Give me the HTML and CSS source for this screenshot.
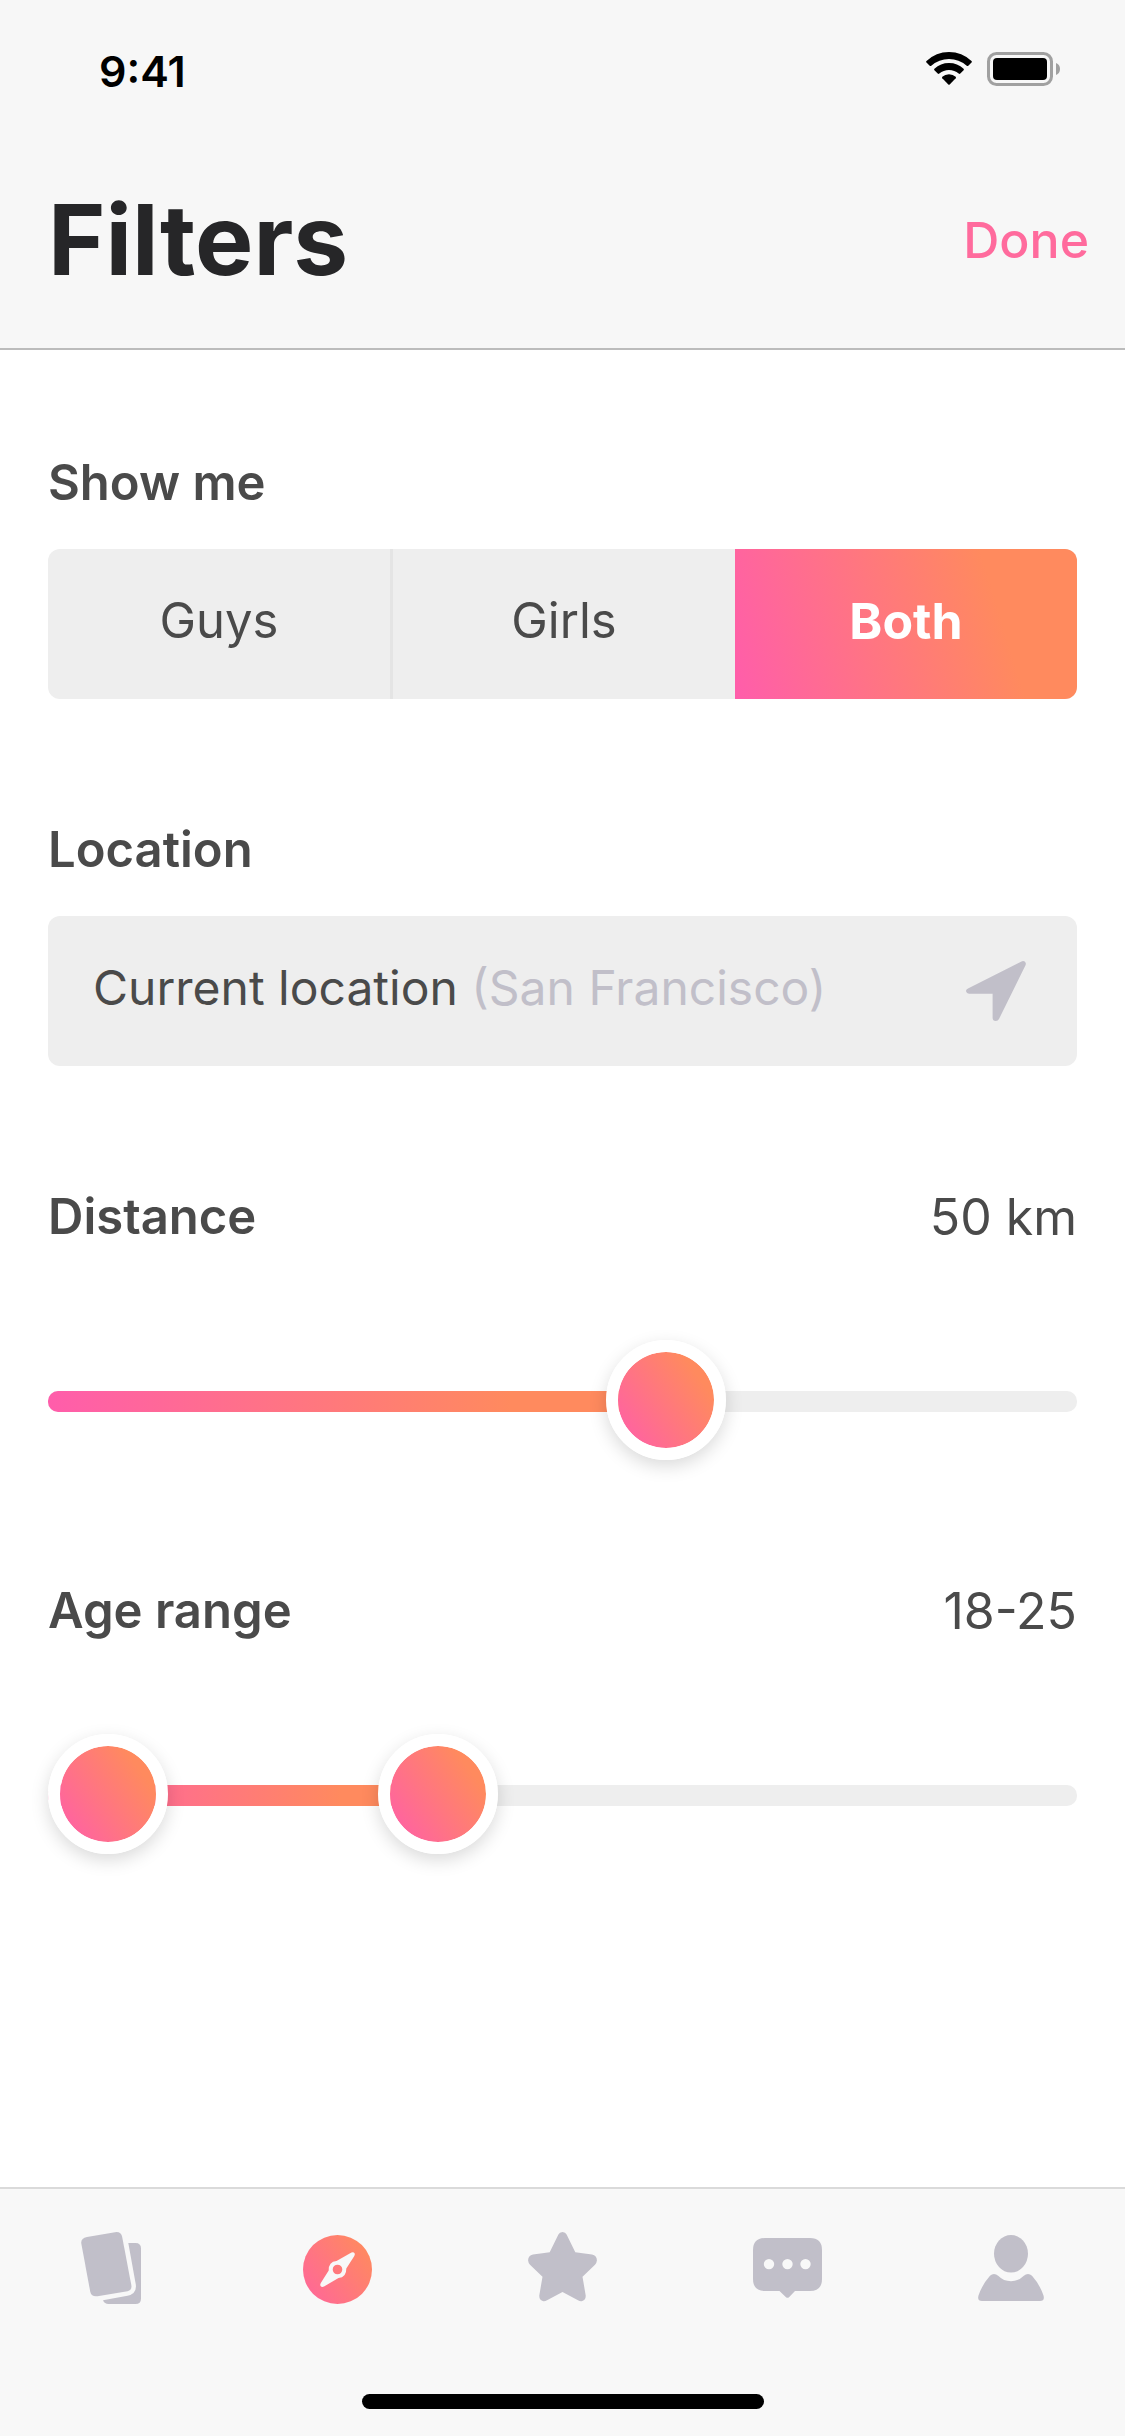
FILE: index.html
```html
<!DOCTYPE html>
<html lang="en">
<head>
    <meta charset="UTF-8">
    <meta name="viewport" content="width=device-width, initial-scale=1.0">
    <title>Filters</title>
    <link rel="stylesheet" href="styles.css">
</head>
<body>
    <header class="header">
        <div class="status-bar">
            <span class="time">9:41</span>
            <div class="status-icons">
                <svg width="46" height="34" viewBox="0 0 46 34">
                    <path d="M0.5 9 Q10 0 23 0 Q36 0 45.5 9 Q46.3 9.800 45.500 10.600 L42.300 13.800 Q41.500 14.400 40.700 13.700 Q33 7 23 7 Q13 7 5.300 13.700 Q4.500 14.400 3.700 13.800 L0.500 10.600 Q-0.300 9.800 0.500 9 Z" />
                    <path d="M8.400 16.800 Q14.500 11 23 11 Q31.500 11 37.600 16.800 Q38.300 17.500 37.600 18.300 L34.300 21.600 Q33.500 22.200 32.700 21.600 Q28.500 18 23 18 Q17.500 18 13.300 21.600 Q12.500 22.200 11.700 21.600 L8.400 18.300 Q7.700 17.500 8.400 16.800 Z" />
                    <path d="M16.300 24.800 Q19 22.300 23 22.300 Q27 22.300 29.700 24.800 Q30.300 25.500 29.700 26.200 L23.700 32.500 Q23 33.200 22.300 32.500 L16.300 26.200 Q15.700 25.500 16.300 24.800 Z" />
                </svg>
                <svg width="73" height="34" viewBox="0 0 73 34">
                    <rect class="battery-case" x="1.5" y="1.5" width="63" height="31" rx="8" />
                    <rect x="6" y="6" width="54" height="22" rx="4" />
                    <path class="battery-cap" d="M69 11 Q73 12.500 73 17 Q73 21.500 69 23 Z" />
                </svg>
            </div>
        </div>
        <div class="title-bar">
            <h1>Filters</h1>
            <button type="button" class="done">Done</button>
        </div>
    </header>

    <main>
        <fieldset class="group">
            <legend class="label">Show me</legend>
            <div class="segments">
                <label class="segment"><input type="radio" name="show" value="guys"><span>Guys</span></label>
                <label class="segment"><input type="radio" name="show" value="girls"><span>Girls</span></label>
                <label class="segment"><input type="radio" name="show" value="both" checked><span>Both</span></label>
            </div>
        </fieldset>

        <section class="group">
            <label class="label" for="location">Location</label>
            <button type="button" class="location" id="location">
                <span>Current location <span class="city">(San Francisco)</span></span>
                <svg width="60" height="60" viewBox="0 0 60 60">
                    <path d="M55.500 0.400 Q58 -0.500 59.500 1.500 Q60.200 2.800 59.500 4.300 L33 58 Q32 60 29.800 60 Q26.600 60 26.600 56.500 V32.700 H3 Q0.500 32.700 0 30.300 Q-0.200 28.500 2 27.600 Z" />
                </svg>
            </button>
        </section>

        <section class="group">
            <div class="row">
                <label class="label" for="distance">Distance</label>
                <output class="value" for="distance">50 km</output>
            </div>
            <div class="slider">
                <div class="track"><div class="fill" style="width: 60%"></div></div>
                <input type="range" id="distance" min="0" max="100" step="0.1" value="61.4" aria-valuetext="50 km">
            </div>
        </section>

        <section class="group">
            <div class="row">
                <label class="label" for="age-min">Age range</label>
                <output class="value" for="age-min age-max">18-25</output>
            </div>
            <div class="slider">
                <div class="track"><div class="fill" style="width: 38%"></div></div>
                <input type="range" id="age-min" min="0" max="100" step="0.1" value="0" aria-valuetext="18">
                <input type="range" id="age-max" min="0" max="100" step="0.1" value="36.3" aria-label="Maximum age" aria-valuetext="25">
            </div>
        </section>
    </main>

    <footer class="footer">
        <nav class="tabs">
            <a href="#cards" class="tab" aria-label="Cards">
                <svg width="69" height="75" viewBox="-3 0 69 75">
                    <path d="M6 6 L34 1.200 Q40 0.300 41.200 6 L50.400 54.500 Q51 59.300 46.500 60.200 L16.500 65.200 Q10.500 66 9.300 61 L0.300 12.500 Q-0.500 7.300 6 6 Z" />
                    <path d="M47.300 12 H54.500 Q60 12 60 17.500 V67.500 Q60 73 54.500 73 H27.500 Q23.500 73 22 69.200 L46.500 64.800 Q56 62.500 54.800 53.500 Z" />
                </svg>
            </a>
            <a href="#explore" class="tab" aria-label="Explore" aria-current="page">
                <svg width="69" height="75" viewBox="0 -4 69 75">
                    <defs>
                        <linearGradient id="warm" x1="0" y1="0.850" x2="0.950" y2="0.150">
                            <stop offset="0" stop-color="#ff6799" />
                            <stop offset="1" stop-color="#ff8a5e" />
                        </linearGradient>
                    </defs>
                    <circle cx="34.500" cy="34.500" r="34.500" fill="url(#warm)" />
                    <path class="needle" fill-rule="evenodd" d="M48.500 17.500 Q50.500 16.500 51.600 18.200 Q52.200 19.500 51.300 21 L43.300 33.500 Q43.500 42.500 35.500 43 L21 51.600 Q18.800 52.600 17.500 50.900 Q16.800 49.500 17.800 47.900 L25.700 35.500 Q25.500 26.500 33.500 26 Z M34.500 29.700 A4.800 4.800 0 1 0 34.500 39.300 A4.800 4.800 0 1 0 34.500 29.700 Z" />
                </svg>
            </a>
            <a href="#favourites" class="tab" aria-label="Favourites">
                <svg width="69" height="75" viewBox="0 -1 69 75">
                    <path d="M30.400 2.500 Q31.500 0 34.500 0 Q37.500 0 38.600 2.500 L47.300 20.300 L64 22.500 Q69 23.500 68.900 28.500 Q68.800 30.500 67 32.700 L54.500 44.700 L57.700 63.500 Q58 68.500 53.500 69.200 Q52 69.400 49.500 68 L34.500 60 L19.500 68 Q17 69.400 15.500 69.200 Q11 68.500 11.300 63.500 L14.500 44.700 L2 32.700 Q0.200 30.500 0.100 28.500 Q0 23.500 5 22.500 L21.700 20.300 Z" />
                </svg>
            </a>
            <a href="#messages" class="tab" aria-label="Messages">
                <svg width="69" height="75" viewBox="0 -7 69 75">
                    <path fill-rule="evenodd" d="M12 0 H57 Q69 0 69 12 V41 Q69 53 57 53 H42 L36 59.200 Q34.500 60.500 33 59.200 L26.500 53 H12 Q0 53 0 41 V12 Q0 0 12 0 Z M16 20.900 a5.200 5.200 0 1 0 0 10.400 a5.200 5.200 0 1 0 0 -10.400 Z M34.500 20.900 a5.200 5.200 0 1 0 0 10.400 a5.200 5.200 0 1 0 0 -10.400 Z M52.500 20.900 a5.200 5.200 0 1 0 0 10.400 a5.200 5.200 0 1 0 0 -10.400 Z" />
                </svg>
            </a>
            <a href="#profile" class="tab" aria-label="Profile">
                <svg width="69" height="75" viewBox="0 -4 69 75">
                    <ellipse cx="33" cy="18.800" rx="17" ry="18.800" />
                    <path d="M12 40.700 Q16 37 20.500 41 Q25.500 46.200 33 46.200 Q40.500 46.200 45.500 41 Q50 37 54 40.700 Q61.500 49 65.500 60.500 Q67 66 62 66 H4 Q-1 66 0.500 60.500 Q4.500 49 12 40.700 Z" />
                </svg>
            </a>
        </nav>
        <div class="home-indicator"></div>
    </footer>
</body>
</html>
```
FILE: styles.css
```css
* {
    box-sizing: border-box;
}

body {
    margin: 0;
    display: flex;
    flex-direction: column;
    min-height: 100vh;
    background: #fff;
    color: #4a4a4a;
    font-family: Inter, "Liberation Sans", sans-serif;
    font-size: 50px;
    line-height: 60px;
}

button {
    border: none;
    padding: 0;
    background: none;
    color: inherit;
    font: inherit;
    cursor: pointer;
}

/* header */

.header {
    background: #f7f7f7;
    border-bottom: 2px solid #bcbcbc;
}

.status-bar {
    display: flex;
    justify-content: space-between;
    align-items: center;
    height: 132px;
    padding: 10px 65px 0 99px;
    color: #000;
}

.time {
    font-size: 43px;
    font-weight: 600;
}

.status-icons {
    display: flex;
    gap: 15px;
    padding-bottom: 4px;
}

.battery-case {
    fill: none;
    stroke: #a0a0a0;
    stroke-width: 3px;
}

.battery-cap {
    fill: #a0a0a0;
}

.title-bar {
    display: flex;
    justify-content: space-between;
    align-items: center;
    height: 216px;
    padding: 0 36px 0 48px;
}

h1 {
    margin: 0;
    color: #262628;
    font-size: 98px;
    font-weight: 700;
    line-height: 120px;
}

.done {
    color: #ff6b9d;
    font-weight: 500;
}

/* filters */

main {
    flex: 1;
    display: flex;
    flex-direction: column;
    gap: 121px;
    padding: 103px 48px 60px;
}

.group {
    margin: 0;
    padding: 0;
    border: none;
    min-width: 0;
}

.label {
    display: block;
    padding: 0;
    font-size: 49px;
    font-weight: 600;
}

.row {
    display: flex;
    justify-content: space-between;
}

.segments,
.location {
    margin-top: 36px;
    height: 150px;
    border-radius: 12px;
    background: #eee;
    font-size: 49px;
    overflow: hidden;
}

.segments {
    display: flex;
}

.segment {
    flex: 1 1 0;
    box-sizing: content-box;
    position: relative;
    display: flex;
    cursor: pointer;
}

.segment:first-child {
    border-right: 3px solid #e4e4e4;
}

.segment input {
    position: absolute;
    opacity: 0;
}

.segment span {
    flex: 1;
    display: flex;
    justify-content: center;
    align-items: center;
    padding-bottom: 6px;
}

.segment input:checked + span {
    background: linear-gradient(73deg, #ff5dab, #ff8a5e 75%);
    color: #fff;
    font-size: 50px;
    font-weight: 700;
}

.location {
    display: flex;
    justify-content: space-between;
    align-items: center;
    width: 100%;
    padding: 0 51px 0 45px;
    font-size: 48px;
    text-align: left;
}

.location > span {
    padding-bottom: 6px;
}

.location svg {
    fill: #c1bfc9;
}

.city {
    color: #c1bfc9;
}

/* sliders */

.slider {
    position: relative;
    height: 120px;
    margin-top: 93px;
    padding-top: 51px;
}

.track {
    height: 21px;
    border-radius: 10px;
    background: #eee;
    overflow: hidden;
}

.fill {
    height: 100%;
    background: linear-gradient(90deg, #ff5dab, #ff8a5e 75%);
}

.slider input {
    position: absolute;
    top: 0;
    left: 0;
    width: 100%;
    height: 120px;
    margin: 0;
    background: none;
    appearance: none;
    pointer-events: none;
}

.slider input::-webkit-slider-thumb {
    appearance: none;
    width: 120px;
    height: 120px;
    border: 12px solid #fff;
    border-radius: 50%;
    background: linear-gradient(55deg, #ff5dab, #ff8a5e 80%) padding-box;
    box-shadow: 0 6px 18px rgba(0, 0, 0, 0.15);
    pointer-events: auto;
    cursor: pointer;
}

/* tab bar */

.footer {
    padding-bottom: 27px;
    background: #f8f8f8;
    border-top: 2px solid #dadada;
}

.tabs {
    display: flex;
    height: 205px;
    padding-top: 42px;
}

.tab {
    flex: 1;
    display: flex;
    justify-content: center;
    align-items: flex-start;
}

.tab svg {
    fill: #c1bfc9;
}

.tab .needle {
    fill: #f8f8f8;
}

.home-indicator {
    width: 402px;
    height: 15px;
    margin: 0 auto;
    border-radius: 8px;
    background: #000;
}
```
